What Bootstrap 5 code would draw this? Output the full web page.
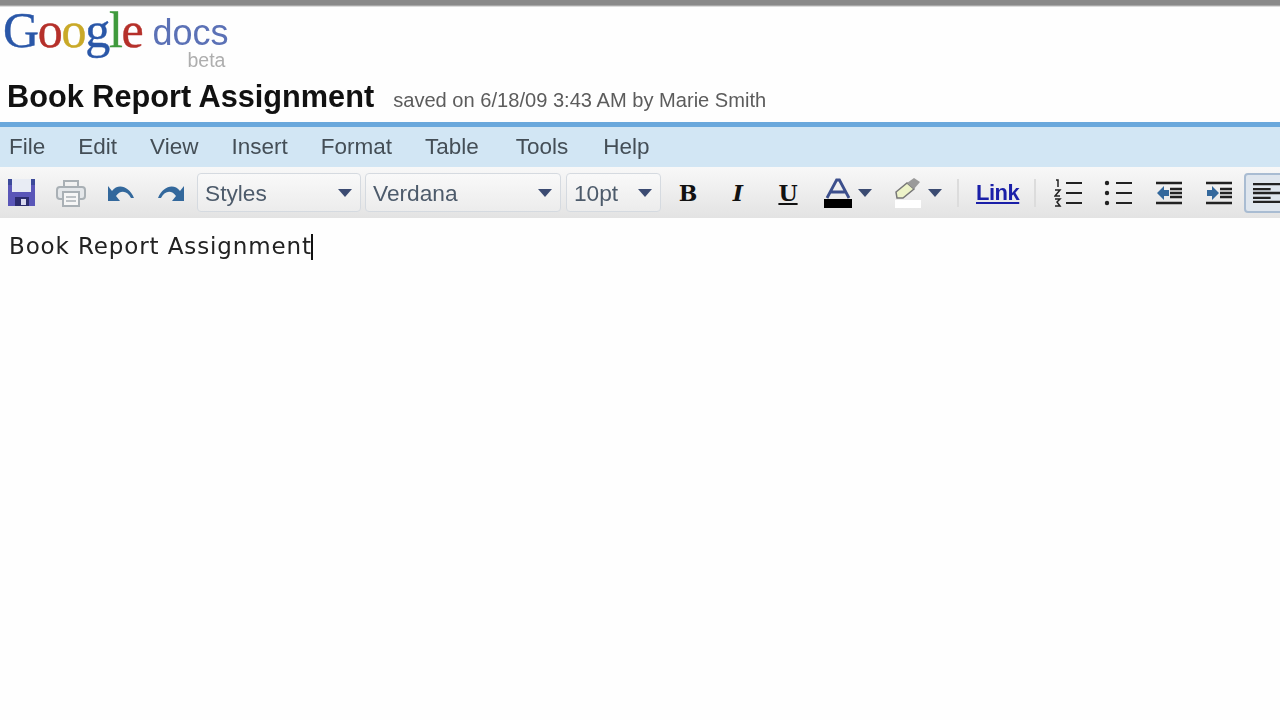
<!DOCTYPE html>
<html lang="en">
<head>
<meta charset="utf-8">
<title>Google Docs</title>
<link href="https://cdn.jsdelivr.net/npm/bootstrap@5.3.0/dist/css/bootstrap.min.css" rel="stylesheet">
<style>
html,body{height:720px;overflow:hidden;background:#fefefe;font-family:"Liberation Sans",Arial,sans-serif}
.topline{height:7px;background:linear-gradient(#8a8a8a 0,#8a8a8a 5px,#c4c4c4 6px,#f4f4f4 7px)}
.pagehead{height:115px;padding-left:3px}
.logo-row{height:53px}
.gword{font-family:"Liberation Serif",serif;font-size:50px;line-height:50px;letter-spacing:-1.3px;margin-top:-2px;filter:blur(.5px);-webkit-text-stroke:.4px currentColor}
.gb{color:#2a57a8}.gr{color:#b5302a}.gy{color:#c9a928}.gg{color:#3f9a3c}
.docs-col{margin-left:10px;width:80px;color:#5b71b6;font-size:36px;line-height:36px;margin-top:8px;filter:blur(.4px)}
.beta-tag{color:#aeaeae;font-size:19.5px;line-height:18px;text-align:right;padding-right:7px}
.docline{padding-left:4px;margin-top:21px;align-items:baseline;filter:blur(.35px)}
.doctitle{font-size:30.7px;font-weight:700;color:#111;line-height:32px;margin:0}
.saved{font-size:20.1px;color:#5c5c5c;margin-left:19px}
.bluebar{height:5px;background:#6aa8dc}
.menubar{height:40px;background:#d2e6f4;padding-left:9px;padding-bottom:1px;gap:33px;font-size:22.5px;color:#444e56;filter:blur(.35px)}
.menu-tools{margin-left:4px}
.menu-help{margin-left:2px}
.toolbar{height:51px;background:linear-gradient(#f8f8f8,#e3e3e3);padding-left:6px;overflow:hidden}
.tb{width:30px;height:30px;flex:none;margin-right:20px;color:#222}
.tb svg{display:block;margin:auto}
.sel{height:39px;flex:none;border:1.5px solid #d5dae0;border-radius:4px;background:linear-gradient(#f9f9f9,#ececec);font-size:22.7px;color:#4d5b6b;padding:1px 8px 0 7px;filter:blur(.3px)}
.sel-styles{width:164px;margin-left:-9px;margin-right:4px}
.sel-verdana{width:196px;margin-right:5px}
.sel-size{width:95px;margin-right:12px}
.caret{width:0;height:0;border-left:7.5px solid transparent;border-right:7.5px solid transparent;border-top:8px solid #3b4b72;flex:none}
.fmt{font-family:"DejaVu Serif",serif;font-size:22px;line-height:30px;text-align:center;font-weight:700;color:#111}
.fmt-u{text-decoration:underline}
.pair{width:50px;margin-right:20px;flex:none}
.pair .caret{margin-left:5px}
.pair-last{margin-right:14px}
.sepl{width:2px;height:28px;background:#dcdcdc;flex:none}
.linkbtn{font-size:22px;letter-spacing:-.5px;font-weight:700;color:#1a1fa8;text-decoration:underline;margin:0 15px 0 17px;filter:blur(.3px)}
.tb-first{margin-left:18px}
.alignbtn{width:60px;height:40px;flex:none;background:#dfe6ee;border:2px solid #a9bcd2;border-radius:4px;margin-left:-10px;padding-left:7px}
.editor{padding:13px 0 0 9px;font-family:"DejaVu Sans",Verdana,sans-serif;font-size:23px;letter-spacing:.88px;line-height:30px;color:#222;filter:blur(.3px)}
.cursor{display:inline-block;width:2px;height:26px;background:#111;vertical-align:-6px;margin-left:-1px}
</style>
</head>
<body>
<div class="topline"></div>
<header class="pagehead">
  <div class="d-flex logo-row">
    <div class="gword"><span class="gb">G</span><span class="gr">o</span><span class="gy">o</span><span class="gb">g</span><span class="gg">l</span><span class="gr">e</span></div>
    <div class="docs-col">docs<div class="beta-tag">beta</div></div>
  </div>
  <div class="d-flex docline"><h1 class="doctitle">Book Report Assignment</h1><span class="saved">saved on 6/18/09 3:43 AM by Marie Smith</span></div>
</header>
<div class="bluebar"></div>
<nav class="menubar d-flex align-items-center"><span>File</span><span>Edit</span><span>View</span><span>Insert</span><span>Format</span><span>Table</span><span class="menu-tools">Tools</span><span class="menu-help">Help</span></nav>
<div class="toolbar d-flex align-items-center">
  <div class="tb d-flex align-items-center"><svg width="27" height="27" viewBox="0 0 27 27"><path d="M0 0H27V27H0Z" fill="#5a56b8"/><path d="M0 0H27V6H0Z" fill="#3c4a9a"/><path d="M4 0H23V13H4Z" fill="#e8ecf4"/><path d="M7 18H21V27H7Z" fill="#2c2c6e"/><path d="M13 20H18V26H13Z" fill="#d8d8ee"/></svg></div>
  <div class="tb d-flex align-items-center"><svg width="30" height="28" viewBox="0 0 30 28" fill="none" stroke="#a9b0b5" stroke-width="2"><path d="M8 8V2H22V8"/><rect x="1" y="8" width="28" height="12" rx="3" fill="#e4e7ea"/><rect x="7" y="13" width="16" height="14" fill="#f6f6f6"/><path d="M10 18H20M10 22H20" stroke-width="1.6"/></svg></div>
  <div class="tb d-flex align-items-center"><svg width="28" height="18" viewBox="0 0 28 18"><path d="M27 14C22 2 11 -1 5 7L1 2V17H13L9 12C13 6 20 6 24 14Z" fill="#33689c"/></svg></div>
  <div class="tb d-flex align-items-center"><svg width="28" height="18" viewBox="0 0 28 18"><path d="M1 14C6 2 17 -1 23 7L27 2V17H15L19 12C15 6 8 6 4 14Z" fill="#33689c"/></svg></div>
  <div class="sel sel-styles d-flex align-items-center justify-content-between"><span>Styles</span><i class="caret"></i></div>
  <div class="sel sel-verdana d-flex align-items-center justify-content-between"><span>Verdana</span><i class="caret"></i></div>
  <div class="sel sel-size d-flex align-items-center justify-content-between"><span>10pt</span><i class="caret"></i></div>
  <div class="tb fmt">B</div>
  <div class="tb fmt fst-italic">I</div>
  <div class="tb fmt fmt-u">U</div>
  <div class="pair d-flex align-items-center"><svg width="30" height="30" viewBox="0 0 30 30"><path d="M4 20L13.6 2H16.4L26 20M8 14H22" fill="none" stroke="#3c4f8c" stroke-width="2.8"/><path d="M1 21H29V30H1Z" fill="#000"/></svg><i class="caret"></i></div>
  <div class="pair pair-last d-flex align-items-center"><svg width="30" height="30" viewBox="0 0 30 30"><path d="M3 14L14 5L21 11L10 20H4Z" fill="#edf3c8" stroke="#777" stroke-width="1.5"/><path d="M14 5L21 0L27 4L21 11Z" fill="#9a9a9a"/><path d="M2 22H28V30H2Z" fill="#fff"/></svg><i class="caret"></i></div>
  <div class="sepl"></div>
  <div class="linkbtn">Link</div>
  <div class="sepl"></div>
  <div class="tb tb-first d-flex align-items-center"><svg width="30" height="28" viewBox="0 0 30 28" stroke="#222" stroke-width="2"><path d="M12 4H28M12 14H28M12 24H28"/><path d="M2 1H4V8M1 11H6L1 17H6M1 20H6L3 23L6 27H1" fill="none" stroke-width="1.5"/></svg></div>
  <div class="tb d-flex align-items-center"><svg width="30" height="28" viewBox="0 0 30 28" stroke="#222" stroke-width="2"><path d="M12 4H28M12 14H28M12 24H28"/><circle cx="3" cy="4" r="2.2" fill="#222" stroke="none"/><circle cx="3" cy="14" r="2.2" fill="#222" stroke="none"/><circle cx="3" cy="24" r="2.2" fill="#222" stroke="none"/></svg></div>
  <div class="tb d-flex align-items-center"><svg width="26" height="24" viewBox="0 0 26 24" stroke="#222" stroke-width="2.6"><path d="M0 2H26M14 8H26M14 12H26M14 16H26M0 22H26"/><path d="M1 12L8 5V9H13V15H8V19Z" fill="#33689c" stroke="none"/></svg></div>
  <div class="tb d-flex align-items-center"><svg width="26" height="24" viewBox="0 0 26 24" stroke="#222" stroke-width="2.6"><path d="M0 2H26M14 8H26M14 12H26M14 16H26M0 22H26"/><path d="M13 12L6 5V9H1V15H6V19Z" fill="#33689c" stroke="none"/></svg></div>
  <div class="alignbtn d-flex align-items-center"><svg width="50" height="22" viewBox="0 0 50 22" stroke="#222" stroke-width="2.4"><path d="M0 2H30M0 7H18M0 11H30M0 16H18M0 20H30"/></svg></div>
</div>
<main class="editor">Book Report Assignment<span class="cursor"></span></main>
</body>
</html>
